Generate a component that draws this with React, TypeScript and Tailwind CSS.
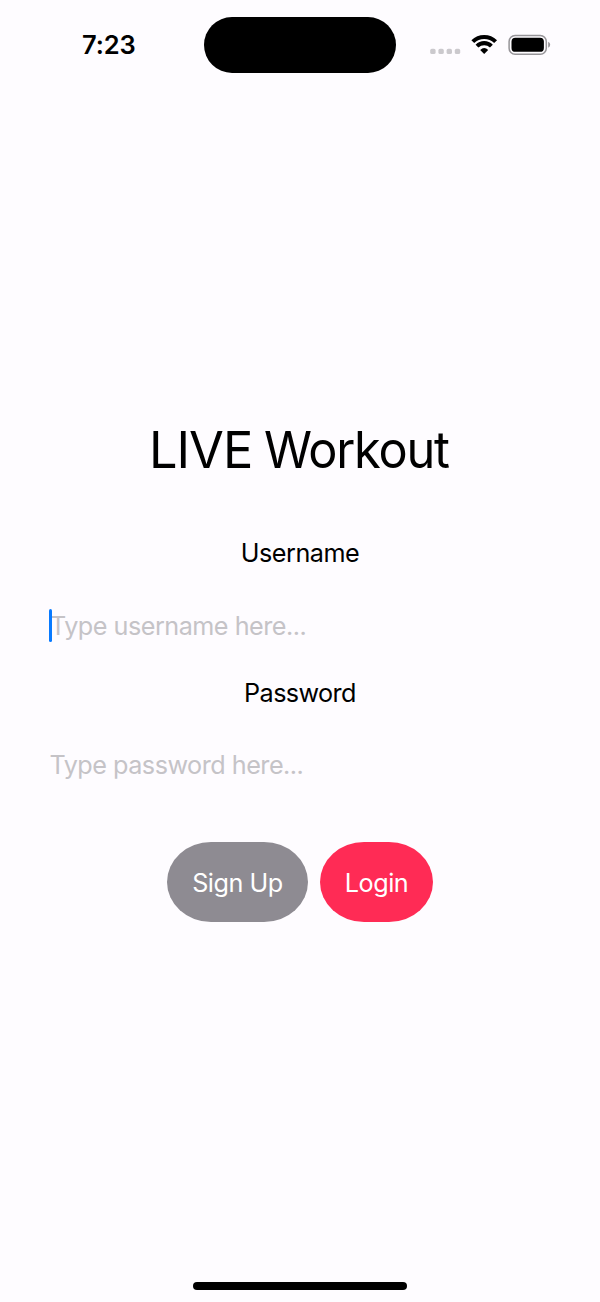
const FONT = "font-['Inter','Liberation_Sans',sans-serif]";

function StatusBar() {
  return (
    <header className="flex h-[73px] shrink-0 pt-[17px]">
      <div className="flex w-[204.4px] items-center pl-[82px] text-[25.5px] font-semibold leading-[56px] tracking-[-0.1px]">
        7:23
      </div>
      <div className="h-[56px] w-[191.2px] shrink-0 rounded-full bg-black" />
      <svg className="ml-[24.4px] h-[56px] w-[140px] shrink-0" viewBox="420 17 140 56" fill="none">
        <g fill="#cbc9cd">
          <rect x="430.2" y="48.8" width="5.4" height="5.3" rx="1.7" />
          <rect x="438.4" y="48.8" width="5.4" height="5.3" rx="1.7" />
          <rect x="446.6" y="48.8" width="5.4" height="5.3" rx="1.7" />
          <rect x="454.8" y="48.8" width="5.4" height="5.3" rx="1.7" />
        </g>
        <g stroke="#000" strokeWidth="4.1">
          <path d="M472.8 41.6 A16.4 16.4 0 0 1 495.6 41.6" />
          <path d="M477 46.1 A10.3 10.3 0 0 1 491.4 46.1" />
        </g>
        <path d="M484.2 54 L480.2 49.9 Q484.2 46.1 488.2 49.9 Z" fill="#000" />
        <rect x="509.1" y="35.4" width="37.2" height="18.8" rx="6" stroke="#969498" strokeWidth="1.5" />
        <rect x="511.5" y="37.8" width="32.4" height="14" rx="3.9" fill="#000" />
        <path d="M548.2 41.8 Q550.2 42.6 550.2 44.8 Q550.2 47 548.2 47.8 Z" fill="#969498" />
      </svg>
    </header>
  );
}

export default function App() {
  return (
    <div className={`flex h-[1302px] w-[600px] flex-col overflow-hidden bg-[#fefcff] text-black ${FONT}`}>
      <StatusBar />
      <main className="flex flex-1 flex-col pt-[347px]">
        <h1 className="flex h-[60px] pl-[149px] text-[50.5px] leading-[60px]">
          <span className="w-[114.5px] shrink-0 tracking-[-1px]">LIVE </span>
          <span className="origin-left scale-x-[0.965] tracking-[-1.3px]">Workout</span>
        </h1>
        <label htmlFor="username" className="mt-[57px] h-[32px] text-center text-[25.2px] leading-[32px] tracking-[-0.5px]">
          Username
        </label>
        <div className="relative mt-[40px] h-[34px] pl-[50px]">
          <input
            id="username"
            placeholder="Type username here..."
            className="block h-[34px] w-[500px] bg-transparent text-[25.2px] leading-[34px] tracking-[-0.5px] outline-none placeholder:text-[#c5c3c7]"
          />
          <span className="absolute left-[49px] top-0 h-[33px] w-[3px] rounded-full bg-[#087aff]" />
        </div>
        <label htmlFor="password" className="mt-[34px] h-[32px] text-center text-[25.2px] leading-[32px] tracking-[-0.6px]">
          Password
        </label>
        <input
          id="password"
          type="password"
          placeholder="Type password here..."
          className="ml-[49.5px] mt-[39px] block h-[34px] w-[500px] bg-transparent text-[25.2px] leading-[34px] tracking-[-0.5px] outline-none placeholder:text-[#c5c3c7]"
        />
        <div className="mt-[60px] flex justify-center gap-[12px] text-[25.2px] leading-[32px] tracking-[-0.45px] text-white">
          <button className="h-[80px] w-[141px] rounded-[44px/40px] bg-[#8e8b92] pt-[2px]">Sign Up</button>
          <button className="h-[80px] w-[113px] rounded-[44px/40px] bg-[#ff2b55] pt-[2px]">Login</button>
        </div>
      </main>
      <div className="mb-[12px] h-[8px] w-[214px] shrink-0 self-center rounded-full bg-black" />
    </div>
  );
}
